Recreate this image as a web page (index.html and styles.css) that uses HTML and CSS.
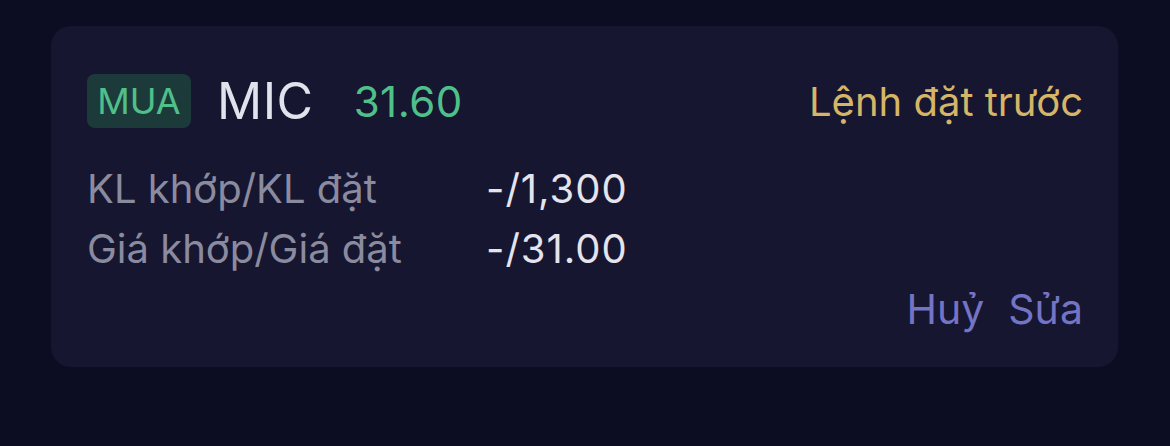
FILE: index.html
```html
<!DOCTYPE html>
<html lang="vi">
<head>
<meta charset="utf-8">
<link rel="stylesheet" href="styles.css">
</head>
<body>
<div class="card">
  <div class="head">
    <span class="badge">MUA</span>
    <span class="sym">MIC</span>
    <span class="price">31.60</span>
    <span class="status">Lệnh đặt trước</span>
  </div>
  <div class="row"><span class="label">KL khớp/KL đặt</span><span class="val">-/1,300</span></div>
  <div class="row"><span class="label">Giá khớp/Giá đặt</span><span class="val">-/31.00</span></div>
  <div class="actions"><span class="act">Huỷ</span><span class="act">Sửa</span></div>
</div>
</body>
</html>
```
FILE: styles.css
```css
html, body { margin: 0; padding: 0; }
body {
  background: #0c0c22;
  font-family: Inter, "Noto Sans", sans-serif;
  width: 1170px;
  height: 446px;
  padding-top: 26px;
  box-sizing: border-box;
}
.card {
  margin-left: 51px;
  width: 1067px;
  height: 341px;
  box-sizing: border-box;
  background: #161631;
  border-radius: 20px;
  padding: 48px 35px 0 36px;
}
.head {
  display: flex;
  align-items: center;
  height: 54px;
}
.badge {
  background: #1d3a3b;
  color: #4fc08a;
  border-radius: 8px;
  width: 104px;
  height: 54px;
  display: flex;
  align-items: center;
  justify-content: center;
  font-size: 36px;
}
.sym {
  color: #e2e2ec;
  font-size: 50px;
  margin-left: 26px;
  letter-spacing: 0.5px;
}
.price {
  color: #4fc08a;
  font-size: 42px;
  margin-left: 40px;
  letter-spacing: 0.5px;
}
.status {
  margin-left: auto;
  color: #d5b566;
  font-size: 40px;
}
.head + .row { margin-top: 30px; }
.row {
  display: flex;
  height: 60px;
  align-items: center;
}
.label {
  width: 399px;
  color: #8b8b9f;
  font-size: 40px;
}
.val {
  color: #e4e4ee;
  font-size: 40px;
  letter-spacing: 1px;
}
.actions {
  display: flex;
  justify-content: flex-end;
  gap: 24px;
  margin-top: 6px;
  height: 50px;
  align-items: center;
}
.act {
  color: #7474c6;
  font-size: 41px;
}
```
